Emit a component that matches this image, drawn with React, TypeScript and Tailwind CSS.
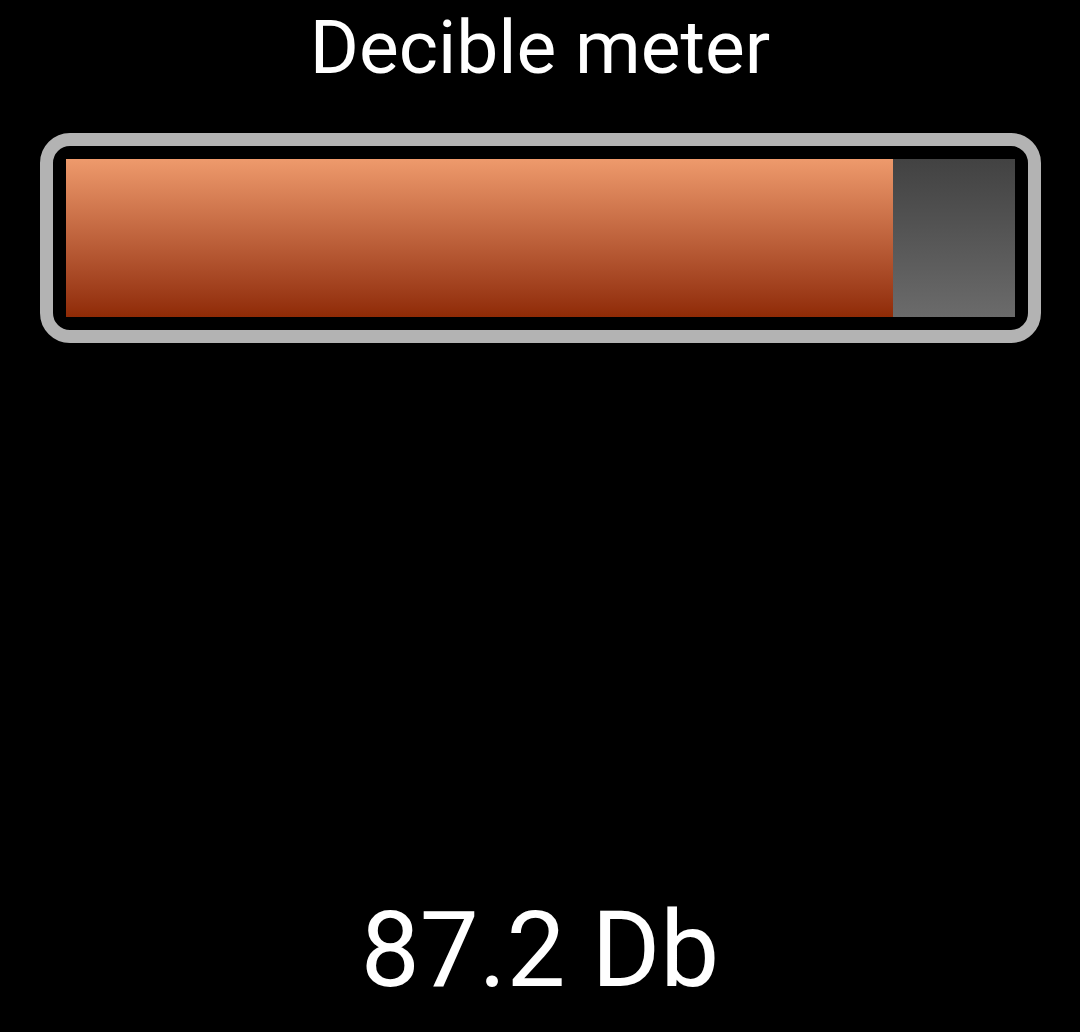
export default function App() {
  const level = 87.2;

  return (
    <div className="flex h-[1032px] w-full flex-col items-center bg-black font-['Roboto',sans-serif] text-white">
      <h1 className="mt-[2px] text-[75px] leading-[90px] font-normal">Decible meter</h1>

      {/* Meter */}
      <div className="mt-[41px] w-[1001px] rounded-[30px] border-[13px] border-[#b3b3b3] p-[13px]">
        <div className="flex h-[158px] w-full bg-gradient-to-b from-[#424242] to-[#6b6b6b]">
          <div
            className="h-full bg-gradient-to-b from-[#ee9a6c] to-[#8f2a05]"
            style={{ width: `${level}%` }}
          />
        </div>
      </div>

      <div className="flex-1" />

      <p className="mb-[20px] text-[105px] leading-[123px]">{level.toFixed(1)} Db</p>
    </div>
  );
}
